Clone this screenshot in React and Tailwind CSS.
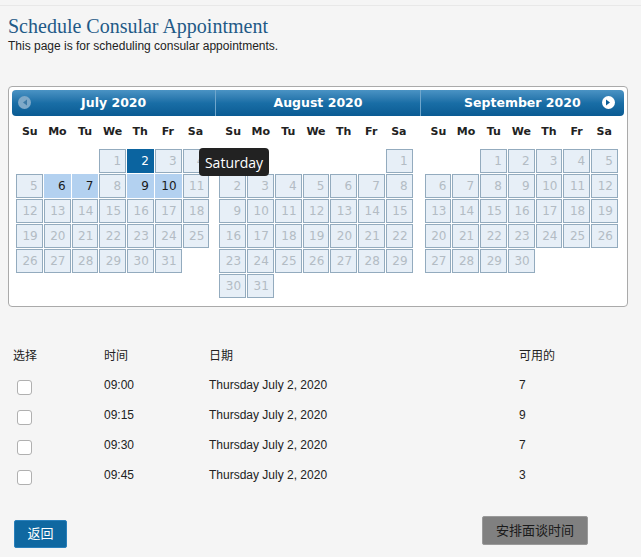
const months = [
  { name: 'July 2020', start: 3, days: 31, enabled: [2, 6, 7, 9, 10], selected: 2 },
  { name: 'August 2020', start: 6, days: 31, enabled: [], selected: null },
  { name: 'September 2020', start: 2, days: 30, enabled: [], selected: null },
]

const dayNames = ['Su', 'Mo', 'Tu', 'We', 'Th', 'Fr', 'Sa']

const slots = [
  { time: '09:00', date: 'Thursday July 2, 2020', count: 7 },
  { time: '09:15', date: 'Thursday July 2, 2020', count: 9 },
  { time: '09:30', date: 'Thursday July 2, 2020', count: 7 },
  { time: '09:45', date: 'Thursday July 2, 2020', count: 3 },
]

function DayCell({ day, month }) {
  if (day === null) return <div className="h-[24px]" />
  const selected = month.selected === day
  const enabled = month.enabled.includes(day)
  let cls = 'bg-[#e7eff7] border-[#93abbe] text-[#b3bcc4]'
  if (selected) cls = 'bg-[#0b64a0] border-[#0b64a0] text-white'
  else if (enabled) cls = 'bg-[#b3d1f0] border-[#b3d1f0] text-[#1a1a1a]'
  return (
    <div className={`h-[24px] border flex items-center justify-end pr-[4px] text-[12px] ${cls}`}>
      {day}
    </div>
  )
}

function Month({ month }) {
  const cells = []
  for (let i = 0; i < month.start; i++) cells.push(null)
  for (let d = 1; d <= month.days; d++) cells.push(d)
  return (
    <div className={`flex-1 ${month.name === 'July 2020' ? 'px-[4px]' : 'px-[6px]'}`}>
      <div className="grid grid-cols-7 h-[33px] items-center font-bold text-[11px] text-[#222]">
        {dayNames.map((d) => (
          <div key={d} className="text-center">{d}</div>
        ))}
      </div>
      <div className="grid grid-cols-7 gap-x-px gap-y-px">
        {cells.map((d, i) => (
          <DayCell key={i} day={d} month={month} />
        ))}
      </div>
    </div>
  )
}

export default function App() {
  return (
    <div className="min-h-[557px] bg-[#f5f5f5] text-[#222]" style={{ fontFamily: '"Liberation Sans", "Noto Sans CJK SC", sans-serif' }}>
      <div className="h-[6px] border-b border-[#e8e8e8]" />
      <div className="px-2">
        <h1 className="mt-[8px] text-[20px] leading-[24px] text-[#1f5a87]" style={{ fontFamily: '"Liberation Serif", serif' }}>
          Schedule Consular Appointment
        </h1>
        <p className="mt-[1px] text-[12px] leading-[14px] text-[#222]">This page is for scheduling consular appointments.</p>

        <div
          className="relative mt-[33px] w-[620px] h-[221px] bg-white border border-[#aaa] rounded-[4px] p-[3px]"
          style={{ fontFamily: '"DejaVu Sans", Verdana, sans-serif' }}
        >
          <div className="flex h-[26px] rounded-[4px] bg-gradient-to-b from-[#4a93c4] via-[#196ea6] to-[#0a5b93] text-white font-bold text-[12.5px]">
            <div className="flex-1 relative flex items-center justify-center border-r border-[#6fa6cc]">
              <span className="absolute left-[6px] top-[6px] w-[13px] h-[13px] rounded-full bg-[#7fa9c8] flex items-center justify-center">
                <svg width="6" height="7" viewBox="0 0 6 7">
                  <path d="M5 0.5 L1 3.5 L5 6.5 Z" fill="#3d7aa6" />
                </svg>
              </span>
              July 2020
            </div>
            <div className="flex-1 flex items-center justify-center border-r border-[#6fa6cc]">August 2020</div>
            <div className="flex-1 relative flex items-center justify-center">
              September 2020
              <span className="absolute right-[9px] top-[6px] w-[13px] h-[13px] rounded-full bg-white flex items-center justify-center">
                <svg width="6" height="7" viewBox="0 0 6 7">
                  <path d="M1 0.5 L5 3.5 L1 6.5 Z" fill="#0b5d96" />
                </svg>
              </span>
            </div>
          </div>
          <div className="flex">
            {months.map((m) => (
              <Month key={m.name} month={m} />
            ))}
          </div>
          <div
            className="absolute left-[190px] top-[61px] w-[70px] h-[28px] rounded-[4px] bg-[#222] text-white text-[14px] flex items-center justify-center"
            style={{ fontFamily: '"Open Sans", sans-serif' }}
          >
            Saturday
          </div>
        </div>

        <div className="mt-[42px] pl-[5px] text-[12px]">
          <div className="flex h-[14px] items-center mb-[7px]">
            <div className="w-[91px]">选择</div>
            <div className="w-[105px]">时间</div>
            <div className="w-[310px]">日期</div>
            <div>可用的</div>
          </div>
          {slots.map((s) => (
            <div key={s.time} className="flex h-[30px] items-center">
              <div className="w-[91px]">
                <div className="ml-[4px] mt-[4px] w-[15px] h-[15px] rounded-[3px] bg-white border border-[#b0b0b0]" />
              </div>
              <div className="w-[105px]">{s.time}</div>
              <div className="w-[310px]">{s.date}</div>
              <div>{s.count}</div>
            </div>
          ))}
        </div>

        <div className="mt-[26px] flex items-start justify-between pl-[6px] pr-[45px]">
          <button className="mt-[4px] w-[53px] h-[28px] rounded-[2px] bg-[#0f68a1] border border-[#2a80bb] text-white text-[13px]">
            返回
          </button>
          <button className="w-[106px] h-[29px] rounded-[2px] bg-[#808080] border border-[#9a9a9a] text-[#1a1a1a] text-[13px]">
            安排面谈时间
          </button>
        </div>
      </div>
    </div>
  )
}
